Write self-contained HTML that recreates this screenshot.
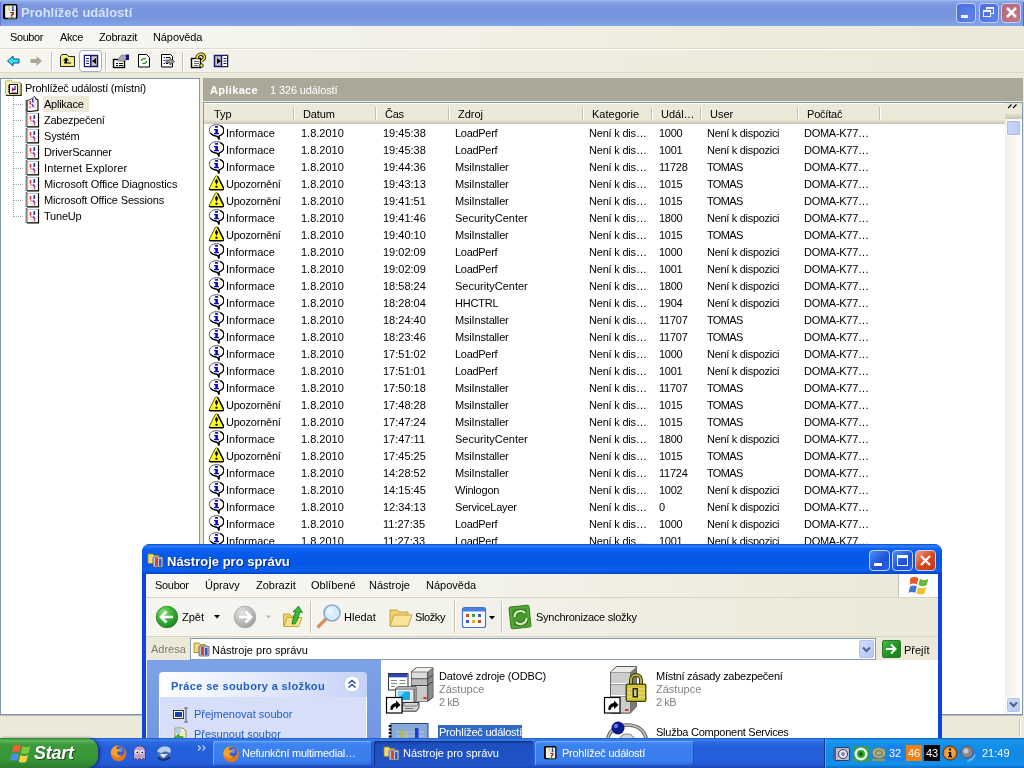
<!DOCTYPE html>
<html><head><meta charset="utf-8"><title>x</title>
<style>
*{box-sizing:border-box;margin:0;padding:0}
html,body{width:1024px;height:768px;overflow:hidden;background:#ece9d8;font-family:"Liberation Sans",sans-serif;font-size:11px;color:#000}
#root{position:absolute;left:0;top:0;width:1024px;height:768px;overflow:hidden;will-change:transform;opacity:.999}
.a{position:absolute}
.t{position:absolute;white-space:nowrap;line-height:13px}
/* window 1 */
#tb1{left:0;top:0;width:1024px;height:26px;background:linear-gradient(#a4bff0 0,#8aa8e8 6%,#7b98e0 20%,#7692dc 50%,#7a9ae2 80%,#82a6ea 100%)}
#tb1 .tt{left:21px;top:5px;font-size:13px;font-weight:bold;color:#d6e2f8;line-height:16px;letter-spacing:0}
.cb{position:absolute;top:3px;width:20px;height:20px;border:1px solid #c4d2f6;border-radius:4px}
#menu1{left:0;top:26px;width:1024px;height:23px;background:linear-gradient(90deg,#f8f7f3 0,#f3f2ea 35%,#efecdd 70%,#ece9d8 100%);border-bottom:1px solid #e0dccb}
#tool1{left:0;top:49px;width:1024px;height:24px;background:linear-gradient(90deg,#f6f5f0 0,#f1efe6 35%,#eeebdc 70%,#ece9d8 100%);border-top:1px solid #fff;border-bottom:1px solid #ddd9c8}
#tree{left:0;top:78px;width:200px;height:637px;background:#fff;border:1px solid #8396aa}
#rh{left:203px;top:78px;width:820px;height:23px;background:#aca899}
#list{left:203px;top:102px;width:820px;height:613px;background:#fff;border:1px solid #8396aa}
#lh{left:204px;top:103px;width:801px;height:21px;background:linear-gradient(#fff 0,#fff 1px,#ece9d8 1px,#ece9d8 17px,#e2decd 18px,#d6d2c2 19px,#cbc7b8 21px)}
.sep{position:absolute;top:107px;width:2px;height:13px;border-left:1px solid #c5c2b0;border-right:1px solid #fff}
.h{position:absolute;top:108px;line-height:13px;white-space:nowrap}
.r{position:absolute;left:0;height:17px;width:1024px}
.r span{position:absolute;top:3px;line-height:13px;white-space:nowrap}
.ic{position:absolute;left:208px;top:0;width:16px;height:16px}
.c1{left:226px}.c2{left:301px}.c3{left:383px}.c4{left:455px}.c5{left:589px;letter-spacing:-.2px}.c6{left:659px;letter-spacing:-.25px}.c7{left:707px}.c8{left:804px;letter-spacing:-.28px}
.tn{position:absolute;left:44px;line-height:13px;white-space:nowrap}
</style></head><body>
<svg width="0" height="0" style="position:absolute">
<defs>
<symbol id="inf" viewBox="0 0 16 16"><path d="M8.500 .7C4.300 .7 1.300 3 1.300 6.200c0 2.300 1.700 4 3.900 5l4.300 1.200 1.400 3 .2-3.500c3-.9 4.700-2.900 4.700-5.700C15.800 3 12.700 .7 8.500 .7z" fill="#fff" stroke="#555" stroke-width="1"/><path d="M12 1.600c2.400 1 3.900 2.600 3.900 4.700 0 2.800-1.700 4.800-4.700 5.700l-.2 3.500-1.400-3-4.300-1.200C4 10.700 3 10 2.300 9" fill="none" stroke="#000" stroke-width="1.300"/><path d="M7.100 1.900h2.800v1.800H7.100zM6 5h3.900v4h1.100v1.200H6V9h1.300V6.200H6z" fill="#0808d0"/></symbol>
<symbol id="wrn" viewBox="0 0 16 16"><path d="M7.400 1.300Q8.500 .2 9.600 1.300L15.500 13Q16 14.500 14.400 14.500H2.600Q1 14.500 1.500 13Z" fill="#ffff18" stroke="#4a4a00" stroke-width=".9"/><path d="M9.600 1.300L15.600 13.100Q16.100 14.700 14.400 14.700H2.600Q1.500 14.700 1.300 13.800" fill="none" stroke="#000" stroke-width="1.400"/><path d="M8.500 3.500l1.600 2.800-1.600 3.800-1.600-3.800z" fill="#000"/><rect x="7.500" y="10.800" width="2" height="1.900" rx=".5" fill="#000"/></symbol>
</defs></svg>
<div id="root">
<!-- ===== Window 1: Event Viewer ===== -->
<div id="tb1" class="a"><span class="t tt">Prohlížeč událostí</span>
<svg class="a" style="left:3px;top:4px" width="15" height="16" viewBox="0 0 15 16"><rect x=".8" y=".8" width="12.900" height="13.700" rx="1" fill="#eeeee2" stroke="#000" stroke-width="1.500"/><rect x=".3" y="1" width="1.900" height="13.300" fill="#000"/><path d="M2 3.500h1M2 6h1M2 8.500h1M2 11h1" stroke="#eee" stroke-width=".9"/><path d="M5 14.300h8" stroke="#8a9a60" stroke-width=".8"/><path d="M6.200 2.500v3.800" stroke="#e0d820" stroke-width="1.700"/><path d="M9.800 2v4.300" stroke="#3048c8" stroke-width="1.500"/><path d="M8.800 6.500h2.500" stroke="#223" stroke-width=".8"/><path d="M7.300 8.600h2.800v1.800l-1.500 .8v.8" fill="none" stroke="#a01818" stroke-width="1.300"/><rect x="8" y="12.400" width="1.300" height="1.200" fill="#801010"/></svg>
<div class="cb" style="left:956px;background:radial-gradient(circle at 70% 70%,#5c84ec,#4a6ade)"><div class="a" style="left:4px;top:11px;width:7px;height:3px;background:#eef3ff"></div></div>
<div class="cb" style="left:979px;background:radial-gradient(circle at 70% 70%,#5c84ec,#4a6ade)"><div class="a" style="left:6px;top:3px;width:8px;height:7px;border:1px solid #eef3ff;border-top-width:2px"></div><div class="a" style="left:3px;top:6px;width:8px;height:7px;border:1px solid #eef3ff;border-top-width:2px;background:#5076e4"></div></div>
<div class="cb" style="left:1001px;background:radial-gradient(circle at 70% 70%,#c47684,#b4687a)"><svg class="a" style="left:3px;top:2px" width="13" height="13" viewBox="0 0 13 13"><path d="M2 2l9 9M11 2l-9 9" stroke="#fff" stroke-width="2.500"/></svg></div>
</div>
<div id="tbl" class="a" style="left:0;top:2px;width:1px;height:24px;background:#6676cf"></div><div class="a" style="left:1023px;top:2px;width:1px;height:24px;background:#5868c4"></div>
<div id="menu1" class="a">
<span class="t" style="left:10px;top:5px;letter-spacing:-.4px">Soubor</span><span class="t" style="left:60px;top:5px;letter-spacing:-.4px">Akce</span><span class="t" style="left:99px;top:5px;letter-spacing:-.2px">Zobrazit</span><span class="t" style="left:153px;top:5px;letter-spacing:-.1px">Nápověda</span>
</div>
<div id="tool1" class="a"></div>
<div class="a" style="left:0;top:73px;width:1024px;height:5px;background:#ece9d8"></div>
<div id="tree" class="a"></div>
<div id="rh" class="a"><span class="t" style="left:7px;top:6px;font-weight:bold;color:#fff;font-size:11px;letter-spacing:.35px">Aplikace</span><span class="t" style="left:67px;top:6px;color:#fff;letter-spacing:-.12px">1 326 událostí</span></div>
<div id="list" class="a"></div>
<div id="lh" class="a"></div>
<!-- toolbar1 icons -->
<svg class="a" style="left:0;top:49px" width="240" height="24" viewBox="0 0 240 24">
<path d="M7.500 12l5.500-5v3h6v4h-6v3z" fill="#30e4f4" stroke="#0a3a70" stroke-width=".9"/>
<path d="M42 12l-5.500-5v3h-6v4h6v3z" fill="#aca899"/>
<path d="M51.500 3v19" stroke="#c8c4b0"/><path d="M52.500 3v19" stroke="#fff"/>
<path d="M60.500 7.500v10h14v-10h-6l-1.500-2h-5z" fill="#f4ee80" stroke="#222"/><path d="M64 14.500h7v-1h-4v-2h2l-3-3-3 3h2z" fill="#000" transform="translate(0,0)"/>
<rect x="79.500" y="1.500" width="22" height="21" rx="3" fill="#fff" stroke="#9ab0cc"/>
<rect x="84.500" y="6.500" width="13" height="11" fill="#c8c8c8" stroke="#1a1a70" stroke-width="1.500"/><rect x="85" y="7" width="5.500" height="10" fill="#fff"/><path d="M90.800 6v12" stroke="#1a1a70" stroke-width="1.500"/><path d="M86 9.500h3M86 12h3M86 14.500h3" stroke="#1a1a70"/><path d="M96 9v6l-4-3z" fill="#000"/>
<path d="M105.500 3v19" stroke="#c8c4b0"/><path d="M106.500 3v19" stroke="#fff"/>
<rect x="113.500" y="10.500" width="11" height="8" fill="#fff" stroke="#000" stroke-width="1.400"/><path d="M116 14.500h2M119 14.500h4M116 16.500h2M119 16.500h4" stroke="#000" stroke-width="1"/><path d="M117 11.500l4.500-5.500h4.500v5l-3.500 1.500z" fill="#a8a8b0" stroke="#555" stroke-width=".5"/><rect x="126" y="5.500" width="3" height="5.500" fill="#101080"/>
<path d="M138.500 5.500h8l3 3v9.500h-11z" fill="#fff" stroke="#000"/><path d="M141.500 12a2.500 2.500 0 0 1 4-2M146.500 12a2.500 2.500 0 0 1-4 2" fill="none" stroke="#1a8a1a" stroke-width="1.300"/>
<path d="M161.500 5.500h9l2 2v10.500h-11z" fill="#fff" stroke="#000"/><path d="M163.500 8.500h1.500M163.500 11.500h1.500M163.500 14.500h1.500" stroke="#1a1aa0" stroke-width="1.200"/><path d="M166 8.500h4M166 14.500h2" stroke="#000"/><path d="M166 11h4v-2l4.500 3.500-4.500 3.500v-2h-4z" fill="#999" stroke="#333" stroke-width=".7"/>
<path d="M182.500 3v19" stroke="#c8c4b0"/><path d="M183.500 3v19" stroke="#fff"/>
<rect x="191.500" y="9.500" width="9" height="9" fill="#fff" stroke="#000" stroke-width="1.400"/><path d="M194 12.500h5M194 14.500h5M194 16.500h4" stroke="#666" stroke-width="1"/><g transform="translate(-.5,1.200)"><path d="M197.500 8.500c0-3 2-4.500 4-4.500s3.500 1.500 3.500 3.200c0 2.300-3 2.300-3 4.300" fill="none" stroke="#000" stroke-width="3.400"/><path d="M197.500 8.500c0-3 2-4.500 4-4.500s3.500 1.500 3.500 3.200c0 2.300-3 2.300-3 4.300" fill="none" stroke="#f4e020" stroke-width="1.800"/><circle cx="202" cy="15.300" r="1.800" fill="#f4e020" stroke="#000" stroke-width=".8"/></g>
<rect x="214.500" y="6.500" width="13" height="11" fill="#c8c8c8" stroke="#1a1a70" stroke-width="1.500"/><rect x="222" y="7" width="5" height="10" fill="#fff"/><path d="M221.500 6v12" stroke="#1a1a70" stroke-width="1.500"/><path d="M223.500 9.500h3M223.500 12h3M223.500 14.500h3" stroke="#1a1a70"/><path d="M217 9v6l4-3z" fill="#000"/>
</svg>
<!-- tree -->
<div class="a" style="left:43px;top:96px;width:46px;height:16px;background:#ece9d8"></div>
<svg class="a" style="left:0;top:78px" width="44" height="150" viewBox="0 0 44 150">
<g stroke="#a8a8a8" stroke-dasharray="1 1"><path d="M13.500 18v121"/><path d="M14 26.500h10M14 42.500h10M14 58.500h10M14 74.500h10M14 90.500h10M14 106.500h10M14 122.500h10M14 138.500h10"/></g>
<path d="M6 17.500h15V5.500" stroke="#000" stroke-width="1.200" fill="none"/><path d="M5.500 3.500l1-1.200h4.500l1.200 2h8v12.500H5.500z" fill="#f4eeb4" stroke="#b8ac60" stroke-width=".8"/><rect x="9.500" y="6.500" width="8" height="9" fill="#fff" stroke="#111"/><path d="M9 7.500v7.500" stroke="#000" stroke-width="1.800" stroke-dasharray="1 .8"/><path d="M12.500 9.500v4" stroke="#c22" stroke-width="1.300"/><path d="M15 8v3.500h-2.500" stroke="#22c" stroke-width="1.300" fill="none"/><path d="M11.500 14.500h5" stroke="#c66" stroke-width=".8"/>
</svg>
<svg width="0" height="0" style="position:absolute"><defs><symbol id="log" viewBox="0 0 16 16"><rect x="2" y="1" width="11.500" height="14" fill="#fff"/><path d="M13.500 1v14.500M2 14.800h12" stroke="#000" stroke-width="1.200" fill="none"/><path d="M2.500 1.300h11" stroke="#aaa" stroke-width=".7"/><path d="M1.500 .5v14.500" stroke="#000" stroke-width="1.800" stroke-dasharray="1 1"/><path d="M2.800 1.500v13" stroke="#777" stroke-width=".7" stroke-dasharray="1 1"/><path d="M5.500 4v3.500" stroke="#d02828" stroke-width="1.600"/><path d="M9.300 3v4" stroke="#2030c8" stroke-width="1.600"/><path d="M5 9h3" stroke="#d06060" stroke-width="1"/><path d="M8.300 8.500l1.800 3" stroke="#7030a0" stroke-width="1.500"/><path d="M4.800 11.500h5M4.800 13h4" stroke="#ccc" stroke-width=".7"/><path d="M9 12l1.200 1.500" stroke="#c03030" stroke-width="1.100"/></symbol>
<symbol id="logo" viewBox="0 0 16 16"><path d="M2 4.500c3-.5 5-1.500 7-4l1.500 .8v10.500c-2 2-4.500 3-8.500 3.500z" fill="#fff" stroke="#222" stroke-width=".9"/><path d="M10.500 2.500l2.500 1.500v10.500l-10 1.200" fill="#eee" stroke="#000" stroke-width="1.100"/><path d="M1.500 4.500v11" stroke="#000" stroke-width="2" stroke-dasharray="1.100 .9"/><path d="M5.200 5v3.500" stroke="#d02828" stroke-width="1.500"/><path d="M7.800 2.500v4" stroke="#2030c8" stroke-width="1.500"/><path d="M7 8l1.500 3" stroke="#7030a0" stroke-width="1.500"/><path d="M5 10.500v1.500" stroke="#d02828" stroke-width="1.200"/></symbol></defs></svg>
<span class="t" style="left:25px;top:82px;letter-spacing:-.25px">Prohlížeč událostí (místní)</span>
<svg class="a" style="left:25px;top:96px" width="16" height="16"><use href="#logo"/></svg><span class="tn" style="top:98px;letter-spacing:-0.25px">Aplikace</span>
<svg class="a" style="left:25px;top:112px" width="16" height="16"><use href="#log"/></svg><span class="tn" style="top:114px;letter-spacing:-0.27px">Zabezpečení</span>
<svg class="a" style="left:25px;top:128px" width="16" height="16"><use href="#log"/></svg><span class="tn" style="top:130px;letter-spacing:-0.20px">Systém</span>
<svg class="a" style="left:25px;top:144px" width="16" height="16"><use href="#log"/></svg><span class="tn" style="top:146px;letter-spacing:-0.20px">DriverScanner</span>
<svg class="a" style="left:25px;top:160px" width="16" height="16"><use href="#log"/></svg><span class="tn" style="top:162px;letter-spacing:0.12px">Internet Explorer</span>
<svg class="a" style="left:25px;top:176px" width="16" height="16"><use href="#log"/></svg><span class="tn" style="top:178px;letter-spacing:-0.10px">Microsoft Office Diagnostics</span>
<svg class="a" style="left:25px;top:192px" width="16" height="16"><use href="#log"/></svg><span class="tn" style="top:194px;letter-spacing:-0.15px">Microsoft Office Sessions</span>
<svg class="a" style="left:25px;top:208px" width="16" height="16"><use href="#log"/></svg><span class="tn" style="top:210px;letter-spacing:-0.20px">TuneUp</span>
<!-- list header -->
<span class="h" style="left:214px">Typ</span><span class="h" style="left:303px;letter-spacing:-.15px">Datum</span><span class="h" style="left:385px;letter-spacing:-.3px">Čas</span><span class="h" style="left:458px">Zdroj</span><span class="h" style="left:592px">Kategorie</span><span class="h" style="left:661px">Udál…</span><span class="h" style="left:710px">User</span><span class="h" style="left:807px;letter-spacing:-.2px">Počítač</span>
<div class="sep" style="left:293px"></div><div class="sep" style="left:375px"></div><div class="sep" style="left:448px"></div><div class="sep" style="left:582px"></div><div class="sep" style="left:651px"></div><div class="sep" style="left:700px"></div><div class="sep" style="left:797px"></div><div class="sep" style="left:879px"></div>
<!-- scrollbar -->
<div class="a" style="left:1005px;top:103px;width:17px;height:611px;background:linear-gradient(90deg,#f0efe6,#fdfdfb)"></div>
<div class="a" style="left:1005px;top:103px;width:17px;height:14px;background:#ece9d8"></div>
<div class="a" style="left:1005px;top:113px;width:17px;height:6px;background:linear-gradient(#ece9d8,#c8c4b4)"></div>
<div class="a" style="left:1006px;top:120px;width:15px;height:16px;background:linear-gradient(90deg,#c8d6fb,#b9cbf8);border:1px solid #fff;border-radius:2px;box-shadow:0 0 0 1px #a9bdf0 inset"></div>
<svg class="a" style="left:1008px;top:104px" width="10" height="5" viewBox="0 0 10 5"><path d="M0 4l3.500-3.500M5 4l3.500-3.500" stroke="#000" stroke-width="1.200"/></svg>
<div class="a" style="left:1006px;top:697px;width:15px;height:16px;background:linear-gradient(135deg,#cfdcfd,#b5c7f6);border:1px solid #fff;border-radius:3px;box-shadow:0 0 0 1px #b0c2f2 inset"></div>
<svg class="a" style="left:1009px;top:701px" width="9" height="8" viewBox="0 0 9 8"><path d="M1 1.500l3.500 3.500L8 1.500" stroke="#4d6185" stroke-width="2" fill="none"/></svg>
<div id="tshadow" class="a" style="left:0;top:715px;width:200px;height:1px;background:#b4bcc0"></div><div class="a" style="left:203px;top:715px;width:820px;height:1px;background:#b4bcc0"></div>
<!-- status bar -->
<div class="a" style="left:0;top:716px;width:1024px;height:22px;background:#ece9d8"></div>
<div class="a" style="left:1020px;top:719px;width:1px;height:17px;background:#fff"></div><div class="a" style="left:1019px;top:719px;width:1px;height:17px;background:#c5c2b2"></div>
<div class="r" style="top:124px"><svg class="ic"><use href="#inf"/></svg><span class="c1" style="letter-spacing:0.00px">Informace</span><span class="c2">1.8.2010</span><span class="c3">19:45:38</span><span class="c4" style="letter-spacing:-0.30px">LoadPerf</span><span class="c5">Není k dis…</span><span class="c6">1000</span><span class="c7" style="letter-spacing:-0.30px">Není k dispozici</span><span class="c8">DOMA-K77…</span></div>
<div class="r" style="top:141px"><svg class="ic"><use href="#inf"/></svg><span class="c1" style="letter-spacing:0.00px">Informace</span><span class="c2">1.8.2010</span><span class="c3">19:45:38</span><span class="c4" style="letter-spacing:-0.30px">LoadPerf</span><span class="c5">Není k dis…</span><span class="c6">1001</span><span class="c7" style="letter-spacing:-0.30px">Není k dispozici</span><span class="c8">DOMA-K77…</span></div>
<div class="r" style="top:158px"><svg class="ic"><use href="#inf"/></svg><span class="c1" style="letter-spacing:0.00px">Informace</span><span class="c2">1.8.2010</span><span class="c3">19:44:36</span><span class="c4" style="letter-spacing:-0.17px">MsiInstaller</span><span class="c5">Není k dis…</span><span class="c6">11728</span><span class="c7" style="letter-spacing:-0.65px">TOMAS</span><span class="c8">DOMA-K77…</span></div>
<div class="r" style="top:175px"><svg class="ic"><use href="#wrn"/></svg><span class="c1" style="letter-spacing:-0.22px">Upozornění</span><span class="c2">1.8.2010</span><span class="c3">19:43:13</span><span class="c4" style="letter-spacing:-0.17px">MsiInstaller</span><span class="c5">Není k dis…</span><span class="c6">1015</span><span class="c7" style="letter-spacing:-0.65px">TOMAS</span><span class="c8">DOMA-K77…</span></div>
<div class="r" style="top:192px"><svg class="ic"><use href="#wrn"/></svg><span class="c1" style="letter-spacing:-0.22px">Upozornění</span><span class="c2">1.8.2010</span><span class="c3">19:41:51</span><span class="c4" style="letter-spacing:-0.17px">MsiInstaller</span><span class="c5">Není k dis…</span><span class="c6">1015</span><span class="c7" style="letter-spacing:-0.65px">TOMAS</span><span class="c8">DOMA-K77…</span></div>
<div class="r" style="top:209px"><svg class="ic"><use href="#inf"/></svg><span class="c1" style="letter-spacing:0.00px">Informace</span><span class="c2">1.8.2010</span><span class="c3">19:41:46</span><span class="c4" style="letter-spacing:0.00px">SecurityCenter</span><span class="c5">Není k dis…</span><span class="c6">1800</span><span class="c7" style="letter-spacing:-0.30px">Není k dispozici</span><span class="c8">DOMA-K77…</span></div>
<div class="r" style="top:226px"><svg class="ic"><use href="#wrn"/></svg><span class="c1" style="letter-spacing:-0.22px">Upozornění</span><span class="c2">1.8.2010</span><span class="c3">19:40:10</span><span class="c4" style="letter-spacing:-0.17px">MsiInstaller</span><span class="c5">Není k dis…</span><span class="c6">1015</span><span class="c7" style="letter-spacing:-0.65px">TOMAS</span><span class="c8">DOMA-K77…</span></div>
<div class="r" style="top:243px"><svg class="ic"><use href="#inf"/></svg><span class="c1" style="letter-spacing:0.00px">Informace</span><span class="c2">1.8.2010</span><span class="c3">19:02:09</span><span class="c4" style="letter-spacing:-0.30px">LoadPerf</span><span class="c5">Není k dis…</span><span class="c6">1000</span><span class="c7" style="letter-spacing:-0.30px">Není k dispozici</span><span class="c8">DOMA-K77…</span></div>
<div class="r" style="top:260px"><svg class="ic"><use href="#inf"/></svg><span class="c1" style="letter-spacing:0.00px">Informace</span><span class="c2">1.8.2010</span><span class="c3">19:02:09</span><span class="c4" style="letter-spacing:-0.30px">LoadPerf</span><span class="c5">Není k dis…</span><span class="c6">1001</span><span class="c7" style="letter-spacing:-0.30px">Není k dispozici</span><span class="c8">DOMA-K77…</span></div>
<div class="r" style="top:277px"><svg class="ic"><use href="#inf"/></svg><span class="c1" style="letter-spacing:0.00px">Informace</span><span class="c2">1.8.2010</span><span class="c3">18:58:24</span><span class="c4" style="letter-spacing:0.00px">SecurityCenter</span><span class="c5">Není k dis…</span><span class="c6">1800</span><span class="c7" style="letter-spacing:-0.30px">Není k dispozici</span><span class="c8">DOMA-K77…</span></div>
<div class="r" style="top:294px"><svg class="ic"><use href="#inf"/></svg><span class="c1" style="letter-spacing:0.00px">Informace</span><span class="c2">1.8.2010</span><span class="c3">18:28:04</span><span class="c4" style="letter-spacing:-0.20px">HHCTRL</span><span class="c5">Není k dis…</span><span class="c6">1904</span><span class="c7" style="letter-spacing:-0.30px">Není k dispozici</span><span class="c8">DOMA-K77…</span></div>
<div class="r" style="top:311px"><svg class="ic"><use href="#inf"/></svg><span class="c1" style="letter-spacing:0.00px">Informace</span><span class="c2">1.8.2010</span><span class="c3">18:24:40</span><span class="c4" style="letter-spacing:-0.17px">MsiInstaller</span><span class="c5">Není k dis…</span><span class="c6">11707</span><span class="c7" style="letter-spacing:-0.65px">TOMAS</span><span class="c8">DOMA-K77…</span></div>
<div class="r" style="top:328px"><svg class="ic"><use href="#inf"/></svg><span class="c1" style="letter-spacing:0.00px">Informace</span><span class="c2">1.8.2010</span><span class="c3">18:23:46</span><span class="c4" style="letter-spacing:-0.17px">MsiInstaller</span><span class="c5">Není k dis…</span><span class="c6">11707</span><span class="c7" style="letter-spacing:-0.65px">TOMAS</span><span class="c8">DOMA-K77…</span></div>
<div class="r" style="top:345px"><svg class="ic"><use href="#inf"/></svg><span class="c1" style="letter-spacing:0.00px">Informace</span><span class="c2">1.8.2010</span><span class="c3">17:51:02</span><span class="c4" style="letter-spacing:-0.30px">LoadPerf</span><span class="c5">Není k dis…</span><span class="c6">1000</span><span class="c7" style="letter-spacing:-0.30px">Není k dispozici</span><span class="c8">DOMA-K77…</span></div>
<div class="r" style="top:362px"><svg class="ic"><use href="#inf"/></svg><span class="c1" style="letter-spacing:0.00px">Informace</span><span class="c2">1.8.2010</span><span class="c3">17:51:01</span><span class="c4" style="letter-spacing:-0.30px">LoadPerf</span><span class="c5">Není k dis…</span><span class="c6">1001</span><span class="c7" style="letter-spacing:-0.30px">Není k dispozici</span><span class="c8">DOMA-K77…</span></div>
<div class="r" style="top:379px"><svg class="ic"><use href="#inf"/></svg><span class="c1" style="letter-spacing:0.00px">Informace</span><span class="c2">1.8.2010</span><span class="c3">17:50:18</span><span class="c4" style="letter-spacing:-0.17px">MsiInstaller</span><span class="c5">Není k dis…</span><span class="c6">11707</span><span class="c7" style="letter-spacing:-0.65px">TOMAS</span><span class="c8">DOMA-K77…</span></div>
<div class="r" style="top:396px"><svg class="ic"><use href="#wrn"/></svg><span class="c1" style="letter-spacing:-0.22px">Upozornění</span><span class="c2">1.8.2010</span><span class="c3">17:48:28</span><span class="c4" style="letter-spacing:-0.17px">MsiInstaller</span><span class="c5">Není k dis…</span><span class="c6">1015</span><span class="c7" style="letter-spacing:-0.65px">TOMAS</span><span class="c8">DOMA-K77…</span></div>
<div class="r" style="top:413px"><svg class="ic"><use href="#wrn"/></svg><span class="c1" style="letter-spacing:-0.22px">Upozornění</span><span class="c2">1.8.2010</span><span class="c3">17:47:24</span><span class="c4" style="letter-spacing:-0.17px">MsiInstaller</span><span class="c5">Není k dis…</span><span class="c6">1015</span><span class="c7" style="letter-spacing:-0.65px">TOMAS</span><span class="c8">DOMA-K77…</span></div>
<div class="r" style="top:430px"><svg class="ic"><use href="#inf"/></svg><span class="c1" style="letter-spacing:0.00px">Informace</span><span class="c2">1.8.2010</span><span class="c3">17:47:11</span><span class="c4" style="letter-spacing:0.00px">SecurityCenter</span><span class="c5">Není k dis…</span><span class="c6">1800</span><span class="c7" style="letter-spacing:-0.30px">Není k dispozici</span><span class="c8">DOMA-K77…</span></div>
<div class="r" style="top:447px"><svg class="ic"><use href="#wrn"/></svg><span class="c1" style="letter-spacing:-0.22px">Upozornění</span><span class="c2">1.8.2010</span><span class="c3">17:45:25</span><span class="c4" style="letter-spacing:-0.17px">MsiInstaller</span><span class="c5">Není k dis…</span><span class="c6">1015</span><span class="c7" style="letter-spacing:-0.65px">TOMAS</span><span class="c8">DOMA-K77…</span></div>
<div class="r" style="top:464px"><svg class="ic"><use href="#inf"/></svg><span class="c1" style="letter-spacing:0.00px">Informace</span><span class="c2">1.8.2010</span><span class="c3">14:28:52</span><span class="c4" style="letter-spacing:-0.17px">MsiInstaller</span><span class="c5">Není k dis…</span><span class="c6">11724</span><span class="c7" style="letter-spacing:-0.65px">TOMAS</span><span class="c8">DOMA-K77…</span></div>
<div class="r" style="top:481px"><svg class="ic"><use href="#inf"/></svg><span class="c1" style="letter-spacing:0.00px">Informace</span><span class="c2">1.8.2010</span><span class="c3">14:15:45</span><span class="c4" style="letter-spacing:-0.20px">Winlogon</span><span class="c5">Není k dis…</span><span class="c6">1002</span><span class="c7" style="letter-spacing:-0.30px">Není k dispozici</span><span class="c8">DOMA-K77…</span></div>
<div class="r" style="top:498px"><svg class="ic"><use href="#inf"/></svg><span class="c1" style="letter-spacing:0.00px">Informace</span><span class="c2">1.8.2010</span><span class="c3">12:34:13</span><span class="c4" style="letter-spacing:-0.20px">ServiceLayer</span><span class="c5">Není k dis…</span><span class="c6">0</span><span class="c7" style="letter-spacing:-0.30px">Není k dispozici</span><span class="c8">DOMA-K77…</span></div>
<div class="r" style="top:515px"><svg class="ic"><use href="#inf"/></svg><span class="c1" style="letter-spacing:0.00px">Informace</span><span class="c2">1.8.2010</span><span class="c3">11:27:35</span><span class="c4" style="letter-spacing:-0.30px">LoadPerf</span><span class="c5">Není k dis…</span><span class="c6">1000</span><span class="c7" style="letter-spacing:-0.30px">Není k dispozici</span><span class="c8">DOMA-K77…</span></div>
<div class="r" style="top:532px"><svg class="ic"><use href="#inf"/></svg><span class="c1" style="letter-spacing:0.00px">Informace</span><span class="c2">1.8.2010</span><span class="c3">11:27:33</span><span class="c4" style="letter-spacing:-0.30px">LoadPerf</span><span class="c5">Není k dis…</span><span class="c6">1001</span><span class="c7" style="letter-spacing:-0.30px">Není k dispozici</span><span class="c8">DOMA-K77…</span></div><!-- ===== Window 2: Explorer ===== -->
<div class="a" id="w2" style="left:142px;top:544px;width:800px;height:194px;background:#0b44de;border-radius:8px 8px 0 0;overflow:hidden">
<div class="a" style="left:0;top:0;width:800px;height:30px;background:linear-gradient(#0a4ad8 0,#3080f8 7%,#0c62f2 16%,#065ae8 35%,#0556e4 65%,#0a60f0 88%,#0344c4 100%)"></div>
<span class="t" style="left:25px;top:10px;font-size:13px;font-weight:bold;color:#fff;line-height:16px;letter-spacing:0;text-shadow:1px 1px 0 #0a2a90">Nástroje pro správu</span>
<svg class="a" style="left:5px;top:8px" width="18" height="16" viewBox="0 0 18 16"><path d="M1 2h5l1 1.500h5v8H1z" fill="#f0d878" stroke="#a08020" stroke-width=".8"/><rect x="6" y="5" width="10" height="10" rx="1" fill="#b8c4e0" stroke="#556" stroke-width=".8"/><rect x="8" y="6" width="3" height="8" fill="#d84820"/><rect x="12" y="7" width="2.500" height="7" fill="#3858c8"/></svg>
<div class="cb" style="left:727px;top:6px;width:21px;height:21px;background:linear-gradient(135deg,#4a8cf8,#1c50d8 60%,#2a64e8)"><div class="a" style="left:4px;top:12px;width:8px;height:3px;background:#fff"></div></div>
<div class="cb" style="left:750px;top:6px;width:21px;height:21px;background:linear-gradient(135deg,#4a8cf8,#1c50d8 60%,#2a64e8)"><div class="a" style="left:4px;top:4px;width:11px;height:11px;border:1px solid #fff;border-top-width:3px"></div></div>
<div class="cb" style="left:773px;top:6px;width:21px;height:21px;background:linear-gradient(135deg,#f0a088,#d84820 50%,#c83810)"><svg class="a" style="left:3px;top:3px" width="13" height="13" viewBox="0 0 13 13"><path d="M2 2l9 9M11 2l-9 9" stroke="#fff" stroke-width="2.300"/></svg></div>
<!-- menu -->
<div class="a" style="left:4px;top:30px;width:792px;height:23px;background:linear-gradient(90deg,#f8f7f3 0,#f3f2ea 45%,#eeebdc 80%,#ece9d8 100%)"></div>
<span class="t" style="left:13px;top:35px;letter-spacing:-.3px">Soubor</span><span class="t" style="left:63px;top:35px">Úpravy</span><span class="t" style="left:114px;top:35px">Zobrazit</span><span class="t" style="left:169px;top:35px">Oblíbené</span><span class="t" style="left:227px;top:35px">Nástroje</span><span class="t" style="left:284px;top:35px">Nápověda</span>
<div class="a" style="left:756px;top:30px;width:40px;height:23px;background:#fff;border-left:1px solid #c8c4b4"></div>
<svg class="a" style="left:766px;top:31px" width="23" height="21" viewBox="0 0 22 20"><path d="M2 3c3-1.500 5-1.500 8 0l-1.500 6c-2.500-1.200-4-1.200-6.500 0z" fill="#e85a28"/><path d="M11.500 3.500c3 1.500 5 1.500 8 0l-1.500 6c-3 1.500-5 1.500-8 0z" fill="#6ab83a"/><path d="M1 11c2.500-1.200 4-1.200 6.500 0l-1.500 6c-2.500-1.200-4-1.200-6.500 0z" fill="#3a78d8" transform="translate(1,0)"/><path d="M9.500 11.500c3 1.500 5 1.500 8 0l-1.500 6c-3 1.500-5 1.500-8 0z" fill="#f0c030"/></svg>
<!-- toolbar -->
<div class="a" style="left:4px;top:53px;width:792px;height:39px;background:linear-gradient(90deg,#f6f5f0 0,#f2f1e9 45%,#eeebdc 80%,#ece9d8 100%);border-top:1px solid #d8d4c4"></div>
<svg class="a" style="left:4px;top:54px" width="500" height="38" viewBox="0 0 500 38">
<defs><radialGradient id="gg" cx=".35" cy=".3" r=".8"><stop offset="0" stop-color="#8fe07f"/><stop offset=".45" stop-color="#3cb43c"/><stop offset="1" stop-color="#1c7a24"/></radialGradient><radialGradient id="gy" cx=".35" cy=".3" r=".8"><stop offset="0" stop-color="#e4e4e4"/><stop offset=".5" stop-color="#c0c0c0"/><stop offset="1" stop-color="#9a9a9a"/></radialGradient></defs><circle cx="21" cy="19" r="10.800" fill="url(#gg)" stroke="#2a8a2a" stroke-width=".8"/><path d="M27 19h-11M20.500 13.500l-5.500 5.500 5.500 5.500" stroke="#fff" stroke-width="2.600" fill="none"/>
<path d="M68 17h6l-3 3.500z" fill="#000"/>
<circle cx="99" cy="19" r="10.800" fill="url(#gy)" stroke="#a8a8a8" stroke-width=".8"/><path d="M93 19h11M99.500 13.500l5.500 5.500-5.500 5.500" stroke="#fff" stroke-width="2.600" fill="none"/>
<path d="M120 17.500h5l-2.500 3z" fill="#b8b8b0"/>
<path d="M137.500 16h6l1.500 2h5v10h-12.500z" fill="#f0d060" stroke="#b89830" stroke-width=".8"/><path d="M138 28.500l3-9h15l-3.500 9z" fill="#f8e488" stroke="#b89830" stroke-width=".8"/><path d="M146 26c1-6 2-9 4-12.500l-3 .5 5.500-6 4 6.500-3-.5c-.5 5-2 8.500-4.500 12z" fill="#38b838" stroke="#1a7a1a" stroke-width=".8"/>
<path d="M164.500 3v32" stroke="#c8c4b0"/><path d="M165.500 3v32" stroke="#fff"/>
<path d="M180.500 20.500l-8 8" stroke="#d8935a" stroke-width="3.400" stroke-linecap="round"/><circle cx="186" cy="15" r="8" fill="#d4ecfc" stroke="#8aa8c8" stroke-width="1.600"/><circle cx="184" cy="13" r="3.500" fill="#f0f8ff" opacity=".8"/>
<path d="M244 12h7l2 2h9v14h-18z" fill="#f0d070" stroke="#b89830" stroke-width=".8"/><path d="M244 28l4-11h18l-4 11z" fill="#f8e498" stroke="#b89830" stroke-width=".8"/>
<path d="M308.500 3v32" stroke="#c8c4b0"/><path d="M309.500 3v32" stroke="#fff"/>
<rect x="316.500" y="9.500" width="23" height="20" rx="2" fill="#fff" stroke="#4a74c8" stroke-width="1.200"/><rect x="317" y="10" width="22" height="3.500" fill="#4a80e0"/><g><rect x="320" y="16" width="3" height="3" fill="#d84820"/><rect x="326" y="16" width="3" height="3" fill="#38a838"/><rect x="332" y="16" width="3" height="3" fill="#3858c8"/><rect x="320" y="22" width="3" height="3" fill="#3858c8"/><rect x="326" y="22" width="3" height="3" fill="#e8b020"/><rect x="332" y="22" width="3" height="3" fill="#d84820"/></g>
<path d="M343 18h6l-3 3.500z" fill="#000"/>
<path d="M355.500 3v32" stroke="#c8c4b0"/><path d="M356.500 3v32" stroke="#fff"/>
<rect x="364" y="8" width="20" height="22" rx="2" fill="#58a838" stroke="#2f7a1c" transform="rotate(-6 374 19)"/><rect x="366.500" y="10.500" width="15" height="17" fill="#489a2c" transform="rotate(-6 374 19)"/><path d="M368.500 19a6 6 0 0 1 10.500-4M380.500 20a6 6 0 0 1-10.500 4" fill="none" stroke="#2a6a14" stroke-width="4.400"/><path d="M368.500 19a6 6 0 0 1 10.500-4M380.500 20a6 6 0 0 1-10.500 4" fill="none" stroke="#cfe8b8" stroke-width="2.400"/>
</svg>
<span class="t" style="left:40px;top:67px">Zpět</span><span class="t" style="left:202px;top:67px">Hledat</span><span class="t" style="left:273px;top:67px;letter-spacing:-.4px">Složky</span><span class="t" style="left:394px;top:67px;letter-spacing:-.25px">Synchronizace složky</span>
<!-- address -->
<div class="a" style="left:4px;top:92px;width:792px;height:24px;background:#ece9d8;border-top:1px solid #d8d4c4"></div>
<span class="t" style="left:9px;top:99px;color:#7a7a72">Adresa</span>
<div class="a" style="left:48px;top:94px;width:686px;height:22px;background:#fff;border:1px solid #7f9db9"></div>
<svg class="a" style="left:51px;top:97px" width="18" height="16" viewBox="0 0 18 16"><path d="M1 2h5l1 1.500h5v8H1z" fill="#f0d878" stroke="#a08020" stroke-width=".8"/><rect x="6" y="5" width="10" height="10" rx="1" fill="#b8c4e0" stroke="#556" stroke-width=".8"/><rect x="8" y="6" width="3" height="8" fill="#d84820"/><rect x="12" y="7" width="2.500" height="7" fill="#3858c8"/></svg>
<span class="t" style="left:70px;top:100px">Nástroje pro správu</span>
<div class="a" style="left:717px;top:96px;width:15px;height:18px;background:linear-gradient(135deg,#d0dcfc,#b4c6f6);border:1px solid #b0c2f2;border-radius:2px"></div>
<svg class="a" style="left:720px;top:102px" width="9" height="8" viewBox="0 0 9 8"><path d="M1 1.500l3.500 3.500L8 1.500" stroke="#4d6185" stroke-width="2" fill="none"/></svg>
<div class="a" style="left:740px;top:96px;width:19px;height:18px;background:linear-gradient(135deg,#4cb84c,#1f8f1f 60%,#1a801a);border:1px solid #2a7a2a;border-radius:2px"></div>
<svg class="a" style="left:743px;top:99px" width="13" height="12" viewBox="0 0 13 12"><path d="M1 6h9M6 1.500l4.500 4.500L6 10.500" stroke="#fff" stroke-width="2" fill="none"/></svg>
<span class="t" style="left:762px;top:100px">Přejít</span>
<!-- content -->
<div class="a" style="left:4px;top:116px;width:235px;height:80px;background:linear-gradient(#7ba2e7,#7596e2);border-left:1px solid #fff"></div>
<div class="a" style="left:239px;top:116px;width:557px;height:80px;background:#fff"></div>
<div class="a" style="left:17px;top:128px;width:208px;height:25px;background:linear-gradient(90deg,#fff,#c6d3f7);border-radius:4px 4px 0 0"></div>
<div class="a" style="left:17px;top:153px;width:208px;height:45px;background:#d6dff7;border-left:1px solid #fff;border-right:1px solid #fff"></div>
<span class="t" style="left:29px;top:136px;font-weight:bold;letter-spacing:.35px;color:#215dc6">Práce se soubory a složkou</span>
<svg class="a" style="left:201px;top:131px" width="18" height="18" viewBox="0 0 18 18"><circle cx="9" cy="9" r="8" fill="#fff" stroke="#b8c8ec"/><path d="M5.500 8.500l3.500-3 3.500 3M5.500 12.500l3.500-3 3.500 3" stroke="#2a4aa0" stroke-width="1.600" fill="none"/></svg>
<span class="t" style="left:52px;top:164px;color:#215dc6">Přejmenovat soubor</span>
<span class="t" style="left:52px;top:184px;color:#215dc6">Přesunout soubor</span>
<svg class="a" style="left:30px;top:163px" width="18" height="18" viewBox="0 0 18 18"><rect x="1.500" y="3.500" width="10" height="8" fill="#fff" stroke="#334"/><rect x="3" y="5" width="7" height="5" fill="#1a40b0"/><path d="M14 1v14M12 1h4M12 15h4" stroke="#667" stroke-width="1.200"/></svg>
<svg class="a" style="left:30px;top:182px" width="18" height="18" viewBox="0 0 18 18"><path d="M3 2h8l3 3v11H3z" fill="#f4ecc0" stroke="#a09050"/><circle cx="6" cy="5" r="3" fill="#b0d0f0"/><path d="M2 12l5-4v2.500h4v3H7V16z" fill="#38b838" stroke="#1a7a1a" stroke-width=".6"/></svg>
<!-- content icons (coords relative to w2: subtract 142,544) -->
<svg class="a" style="left:242px;top:120px" width="52" height="50" viewBox="0 0 52 50">
<path d="M27.500 8l5-4h16.300v29l-5.100 4H27.500z" fill="#c8c8c8" stroke="#111" stroke-width="1.100" stroke-linejoin="round"/><path d="M27.500 8h16.200v29H27.500z" fill="#dcdcdc"/><path d="M43.700 8l5.100-4v29l-5.100 4z" fill="#8c8c8c"/><path d="M27.500 8l5-4h16.300l-5.100 4z" fill="#f0f0f0"/><rect x="28" y="15.500" width="15.500" height="5.500" fill="#bdbdbd"/><rect x="28" y="22.500" width="15.500" height="14" fill="#c9c9c9"/><path d="M27.500 14.800h16.200l5.100-4M27.500 21.500h16.200l5.100-4M43.700 8v29" stroke="#333" stroke-width=".9" fill="none"/><path d="M27.500 8h16.200l5.100-4" stroke="#555" stroke-width=".7" fill="none"/><rect x="39.500" y="33" width="3" height="2" fill="#e02828"/>
<rect x="4.500" y="9.500" width="19.500" height="16.500" fill="#fff" stroke="#333"/><rect x="5" y="10" width="18.500" height="3.300" fill="#2a46b8"/><path d="M7 16.500h6M7 19.500h6M7 22.500h4M15.500 16.500h6M15.500 19.500h6" stroke="#888"/>
<path d="M11.500 25l2-2.200h18.500v13.500l-2 2.300H11.500z" fill="#e4e4e4" stroke="#333" stroke-width=".9"/><path d="M30 25l2-2.200v13.500l-2 2.300z" fill="#999"/><rect x="11.500" y="25" width="18.500" height="13.600" fill="#e0e0e0" stroke="#444" stroke-width=".8"/><rect x="13.800" y="27" width="12.700" height="9.500" fill="#18a8ec" stroke="#fff" stroke-width=".8"/><path d="M14.200 27.400h7l-7 7z" fill="#78d8fc"/>
<path d="M18 42l2.500-3.500h14.500v5l-2.500 3.700H18z" fill="#d4d4d4" stroke="#222" stroke-width=".9"/><path d="M18 42h14.500l2.500-3.500" stroke="#555" stroke-width=".7" fill="none"/><path d="M21 44.500h8" stroke="#777"/>
<rect x="2.500" y="33.500" width="15.500" height="15.500" fill="#fff" stroke="#000" stroke-width="1.200"/><path d="M6.500 46c-.5-4 1.500-6.500 5.500-7V36.500l4.500 4.500-4.500 4v-2.500c-2 .3-3 1.300-3.500 3.500z" fill="#000"/>
</svg>
<svg class="a" style="left:460px;top:120px" width="52" height="50" viewBox="0 0 52 50">
<path d="M8.500 8l6-5.500h20v40l-6 6.500H8.500z" fill="#b8b8b8" stroke="#444" stroke-width=".9"/><path d="M8.500 8h20v41H8.500z" fill="#cdcdcd" stroke="#555" stroke-width=".8"/><path d="M28.500 8l6-5.500v40l-6 6.500z" fill="#7a7a7a"/><path d="M9 8l6-5h19l-5.500 5z" fill="#ececec"/><path d="M9 19.500h19M9 31.500h19" stroke="#fff"/><path d="M9 20.500h19M9 32.500h19" stroke="#999"/><rect x="23" y="45" width="3.500" height="1.800" fill="#e02020"/>
<path d="M29 21v-5a5 5 0 0 1 10 0v5" fill="none" stroke="#3a3a08" stroke-width="4"/><path d="M29 21v-5a5 5 0 0 1 10 0v5" fill="none" stroke="#b8b040" stroke-width="2"/>
<rect x="24.200" y="20.200" width="19.600" height="17.200" rx="1.500" fill="#d0c840" stroke="#3a3a08" stroke-width="1.300"/><path d="M25 25h18M25 29h18M25 33h18" stroke="#e8e488"/><rect x="30.500" y="24" width="5.500" height="9.500" fill="#2a2a08"/><rect x="32" y="25.500" width="2.500" height="6.500" fill="#c8c8a8"/>
<rect x="2.500" y="33.500" width="15.500" height="15.500" fill="#fff" stroke="#000" stroke-width="1.200"/><path d="M6.500 46c-.5-4 1.500-6.500 5.500-7V36.500l4.500 4.500-4.500 4v-2.500c-2 .3-3 1.300-3.500 3.500z" fill="#000"/>
</svg>
<span class="t" style="left:297px;top:126px;letter-spacing:-.15px">Datové zdroje (ODBC)</span><span class="t" style="left:297px;top:139px;color:#808080">Zástupce</span><span class="t" style="left:297px;top:152px;color:#808080;letter-spacing:-.5px">2 kB</span>
<span class="t" style="left:514px;top:126px;letter-spacing:-.27px">Místní zásady zabezpečení</span><span class="t" style="left:514px;top:139px;color:#808080">Zástupce</span><span class="t" style="left:514px;top:152px;color:#808080;letter-spacing:-.5px">2 kB</span>
<div class="a" style="left:296px;top:181px;width:84px;height:15px;background:#316ac5"></div>
<span class="t" style="left:297px;top:182px;color:#fff;letter-spacing:-.25px">Prohlížeč událostí</span>
<span class="t" style="left:514px;top:182px;letter-spacing:-.25px">Služba Component Services</span>
<svg class="a" style="left:246px;top:178px" width="42" height="18" viewBox="0 0 42 18"><rect x="3" y="1.500" width="37" height="18" fill="#88a8d8" stroke="#2a4a90"/><path d="M2 3v14" stroke="#000" stroke-width="2.500" stroke-dasharray="2 1.500"/><path d="M8 10h28M8 14h28" stroke="#b8c8e8"/><rect x="12" y="8" width="3" height="10" fill="#a8b868"/><rect x="17" y="9" width="3" height="9" fill="#c8b878"/><rect x="27" y="6" width="3.500" height="12" fill="#1a3ad0"/></svg>
<svg class="a" style="left:462px;top:176px" width="46" height="20" viewBox="0 0 46 20"><path d="M3 22c2-13 10-17 20-17s18 4 20 17" fill="none" stroke="#666" stroke-width="3.600"/><path d="M3 22c2-13 10-17 20-17s18 4 20 17" fill="none" stroke="#c8c8c8" stroke-width="1.400"/><path d="M14 22c2-6 5-8 9-8s7 2 9 8" fill="#d8d8d8" stroke="#777"/><circle cx="14" cy="8" r="6.500" fill="#0a1a8a"/><circle cx="12" cy="6" r="2.200" fill="#5a7af0"/></svg>
</div>
<!-- ===== Taskbar ===== -->
<div class="a" style="left:0;top:738px;width:1024px;height:30px;background:linear-gradient(#1f52c8 0,#3a82ec 6%,#2a6ae0 14%,#245edb 35%,#2560dc 70%,#2358d2 90%,#1a46b4 100%)"></div>
<div class="a" style="left:0;top:738px;width:98px;height:30px;background:linear-gradient(#2f7f2f 0,#58b858 8%,#3c9a3c 22%,#379637 70%,#2c7c2c 100%);border-radius:0 12px 12px 0;box-shadow:2px 0 3px rgba(0,0,40,.5)"></div>
<span class="t" style="left:34px;top:742px;font-size:18px;font-weight:bold;font-style:italic;color:#fff;line-height:22px;letter-spacing:-.25px;text-shadow:1px 1px 1px #1a4a1a">Start</span>
<svg class="a" style="left:10px;top:743px" width="24" height="22" viewBox="0 0 22 20"><path d="M3 2.500c2.500-1.200 4.500-1.200 7 0l-1.500 6c-2.500-1.200-4-1.200-6.500 0z" fill="#f06030"/><path d="M11.500 3c2.500 1.200 4.500 1.200 7 0l-1.500 6c-2.500 1.200-4.500 1.200-7 0z" fill="#80c840"/><path d="M1.500 10.500c2.500-1.200 4-1.200 6.500 0l-1.500 6c-2.500-1.200-4-1.200-6.500 0z" fill="#4a90e8"/><path d="M9.500 11c2.500 1.200 4.500 1.200 7 0l-1.500 6c-2.500 1.200-4.500 1.200-7 0z" fill="#f8d040"/></svg>
<!-- quick launch -->
<svg class="a" style="left:108px;top:743px" width="100" height="20" viewBox="0 0 100 20">
<circle cx="10.500" cy="10.500" r="7.800" fill="#e87818"/><circle cx="11.500" cy="8.500" r="5" fill="#3a5cc8"/><circle cx="12.500" cy="7" r="2.200" fill="#6a90e8"/><path d="M3 8c1-3.500 4-5.500 7-5.500-1.500 1-2 2-1.500 3.500 1.500 0 3 .5 3.500 2-1.500 0-2.500 .5-3 1.500 0 2 2 3 4 2.500-1.500 2.500-5 3-7.500 1C3 11.500 2.500 9.500 3 8z" fill="#f8a028"/>
<path d="M25.500 17v-8c0-4 3-6 6-6s6 2 6 6v8l-2-1.500-2 1.500-2-1.500-2 1.500-2-1.500z" fill="#bca4d2" stroke="#5a3878" stroke-width="1"/><circle cx="29" cy="9" r="2" fill="#fff"/><circle cx="34" cy="9" r="2" fill="#fff"/><circle cx="29.300" cy="9.300" r=".9" fill="#000"/><circle cx="34.300" cy="9.300" r=".9" fill="#000"/><path d="M29.500 13l2 1.500 2-1.500z" fill="#f0a020"/>
<circle cx="56" cy="10.500" r="7.500" fill="#3a6ac0"/><path d="M49 8c2-4 8-6 13-3 1 2 1 4 0 5-3-2-6-2-8 0-2 0-4-1-5-2z" fill="#b8d0f0"/><path d="M51 11h9l-4.500 4z" fill="#f0f0f0" stroke="#888" stroke-width=".5"/><path d="M50 14c3 4 8 4 12 0" stroke="#1a2a70" stroke-width="2" fill="none"/>
<path d="M90 2.500l2.500 2.500-2.500 2.500M94.500 2.500l2.500 2.500-2.500 2.500" stroke="#b8d0f8" stroke-width="1.200" fill="none"/>
</svg>
<!-- task buttons -->
<div class="a" style="left:213px;top:741px;width:159px;height:25px;background:linear-gradient(#5a9af4 0,#3c82f0 12%,#3a7cec 80%,#2e68d8 100%);border-radius:3px;box-shadow:inset 1px 1px 0 #6aa8f8,inset -1px -1px 0 #2454c0"></div>
<div class="a" style="left:374px;top:741px;width:159px;height:25px;background:linear-gradient(#173e9c 0,#1e4fc0 15%,#2054c8 100%);border-radius:3px;box-shadow:inset 1px 1px 1px #10307c"></div>
<div class="a" style="left:535px;top:741px;width:159px;height:25px;background:linear-gradient(#5a9af4 0,#3c82f0 12%,#3a7cec 80%,#2e68d8 100%);border-radius:3px;box-shadow:inset 1px 1px 0 #6aa8f8,inset -1px -1px 0 #2454c0"></div>
<svg class="a" style="left:221px;top:744px" width="20" height="20" viewBox="0 0 20 20"><circle cx="10" cy="10.500" r="7.800" fill="#e87818"/><circle cx="11" cy="8.500" r="5" fill="#3a5cc8"/><circle cx="12" cy="7" r="2.200" fill="#6a90e8"/><path d="M2.500 8c1-3.500 4-5.500 7-5.500-1.500 1-2 2-1.500 3.500 1.500 0 3 .5 3.500 2-1.500 0-2.500 .5-3 1.500 0 2 2 3 4 2.500-1.500 2.500-5 3-7.500 1C2.500 11.500 2 9.500 2.500 8z" fill="#f8a028"/></svg>
<span class="t" style="left:242px;top:747px;color:#fff;letter-spacing:-.25px">Nefunkční multimedial…</span>
<svg class="a" style="left:383px;top:745px" width="18" height="16" viewBox="0 0 18 16"><path d="M1 2h5l1 1.500h5v8H1z" fill="#f0d878" stroke="#a08020" stroke-width=".8"/><rect x="6" y="5" width="10" height="10" rx="1" fill="#b8c4e0" stroke="#556" stroke-width=".8"/><rect x="8" y="6" width="3" height="8" fill="#d84820"/><rect x="12" y="7" width="2.500" height="7" fill="#3858c8"/></svg>
<span class="t" style="left:403px;top:747px;color:#fff">Nástroje pro správu</span>
<svg class="a" style="left:544px;top:745px" width="13" height="16" viewBox="0 0 15 16"><rect x=".8" y=".8" width="12.900" height="13.700" rx="1" fill="#eeeee2" stroke="#000" stroke-width="1.500"/><rect x=".3" y="1" width="1.900" height="13.300" fill="#000"/><path d="M2 3.500h1M2 6h1M2 8.500h1M2 11h1" stroke="#eee" stroke-width=".9"/><path d="M5 14.300h8" stroke="#8a9a60" stroke-width=".8"/><path d="M6.200 2.500v3.800" stroke="#e0d820" stroke-width="1.700"/><path d="M9.800 2v4.300" stroke="#3048c8" stroke-width="1.500"/><path d="M8.800 6.500h2.500" stroke="#223" stroke-width=".8"/><path d="M7.300 8.600h2.800v1.800l-1.500 .8v.8" fill="none" stroke="#a01818" stroke-width="1.300"/><rect x="8" y="12.400" width="1.300" height="1.200" fill="#801010"/></svg>
<span class="t" style="left:562px;top:747px;color:#fff;letter-spacing:-.25px">Prohlížeč událostí</span>
<!-- tray -->
<div class="a" style="left:824px;top:738px;width:200px;height:30px;background:linear-gradient(#0c5ec0 0,#1c9af0 7%,#1490ea 18%,#1188e4 60%,#1290ea 88%,#0d6cc8 100%);border-left:1px solid #0a3c8c;box-shadow:inset 1px 0 0 #3ab0f8"></div>
<svg class="a" style="left:832px;top:744px" width="60" height="20" viewBox="0 0 60 20">
<rect x="2.500" y="3.500" width="15" height="13" rx="1.500" fill="#b8bcd0" stroke="#3a3a60"/><rect x="1" y="4" width="3" height="12" fill="#5a5a8a"/><circle cx="11" cy="10" r="4.500" fill="#e8e8f0" stroke="#3a3a60"/><circle cx="11" cy="10" r="2" fill="#88a"/>
<rect x="21" y="2" width="16" height="16" rx="2" fill="#3a9a5a"/><circle cx="29" cy="10" r="6.500" fill="#e8f8e8"/><circle cx="29" cy="10" r="4" fill="#2aaa2a"/><circle cx="29" cy="10" r="1.800" fill="#0a4a0a"/>
<ellipse cx="47" cy="9" rx="7" ry="5.500" fill="#a8b088" stroke="#6a7050"/><ellipse cx="47" cy="9" rx="3.500" ry="2.500" fill="none" stroke="#6a7050"/><path d="M40 16h13" stroke="#8a9a6a" stroke-width="2.500"/>
</svg>
<div class="a" style="left:887px;top:745px;width:17px;height:16px;background:#1a80f0"></div><span class="t" style="left:889px;top:747px;color:#fff">32</span>
<div class="a" style="left:906px;top:745px;width:16px;height:16px;background:#f08010"></div><span class="t" style="left:908px;top:747px;color:#fff">46</span>
<div class="a" style="left:924px;top:745px;width:16px;height:16px;background:#000"></div><span class="t" style="left:926px;top:747px;color:#fff">43</span>
<svg class="a" style="left:942px;top:744px" width="36" height="20" viewBox="0 0 36 20">
<circle cx="8" cy="9" r="7" fill="#e88a20" stroke="#5a2a00"/><circle cx="8" cy="9" r="5" fill="#f8c060" opacity=".5"/><path d="M7 4.500h2v2H7zM6.300 8h2.900v4h.9v1.200H6.300V12h.9V9.200h-.9z" fill="#000"/>
<circle cx="25" cy="8" r="6" fill="#888" stroke="#555"/><circle cx="24" cy="7" r="2.500" fill="#ccc"/><path d="M27 16c3-1 5-3 6-6M25 17.500c3-.5 6-2 8-5" stroke="#a8c8f8" stroke-width=".9" fill="none"/>
</svg>
<span class="t" style="left:982px;top:747px;color:#fff">21:49</span>
</div><!--root-->
</body></html>
